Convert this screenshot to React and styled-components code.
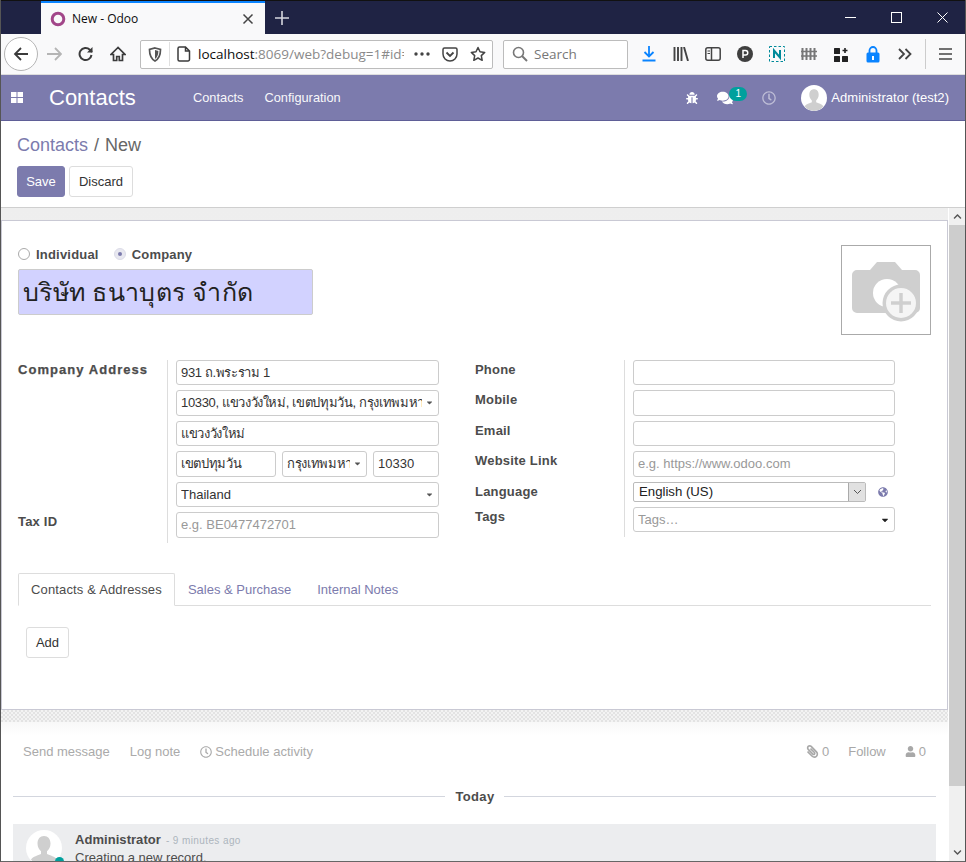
import React from "react";
import styled, { createGlobalStyle } from "styled-components";
import { FaBug, FaComments, FaRegClock, FaPaperclip, FaUser, FaGlobeAmericas, FaCaretDown, FaChevronUp, FaChevronDown } from "react-icons/fa";

const Global = createGlobalStyle`
  html, body { margin: 0; padding: 0; background: #fff; }
  body { font-family: "Liberation Sans", Arial, sans-serif; font-size: 13px; color: #4c4c4c; }
  * { box-sizing: border-box; }
`;

const Win = styled.div`
  width: 966px; height: 862px; overflow: hidden; display: flex; flex-direction: column;
  border-left: 1px solid #555; border-right: 1px solid #555; border-bottom: 1px solid #666; background: #fff;
`;
const TitleBar = styled.div`
  height: 34px; flex: none; background: #1f2344; display: flex; align-items: flex-end; padding-left: 40px; border-top: 1px solid #111;
`;
const Tab = styled.div`
  width: 224px; height: 33px; background: #f9f9fa; border-top: 2px solid #0a84ff; display: flex; align-items: center;
  padding: 0 11px 0 9px; font: 12px "Open Sans", "Liberation Sans", sans-serif; color: #0c0c0d; gap: 6px;
`;
const TabTitle = styled.span` flex: 1; `;
const Plus = styled.div` width: 34px; height: 33px; display: flex; align-items: center; justify-content: center; `;
const WinBtns = styled.div` margin-left: auto; display: flex; height: 33px; align-items: center; `;
const WinBtn = styled.div` width: 46px; height: 33px; display: flex; align-items: center; justify-content: center; `;

const Toolbar = styled.div`
  height: 41px; flex: none; background: #f9f9fa; display: flex; align-items: center; border-bottom: 1px solid #ddd; padding-left: 3px;
`;
const BackBtn = styled.div`
  width: 34px; height: 34px; border-radius: 50%; border: 1px solid #b5b5b5; background: #fff; display: flex; align-items: center; justify-content: center; flex: none;
`;
const TB = styled.div`
  width: ${p => p.$w || 32}px; height: 32px; flex: none; display: flex; align-items: center; justify-content: center;
`;
const UrlBar = styled.div`
  width: 353px; height: 29px; margin-left: 6px; flex: none; background: #fff; border: 1px solid #bcbcbc; border-radius: 2px;
  display: flex; align-items: center; font: 13.5px "Open Sans", "Liberation Sans", sans-serif; color: #0c0c0d; padding-left: 7px;
`;
const UrlSep = styled.div` width: 1px; height: 24px; background: #e0e0e0; margin: 0 7px 0 7px; `;
const UrlText = styled.div` margin-left: 7px; width: 206px; white-space: nowrap; overflow: hidden; `;
const Dim = styled.span` color: #8a8a8a; `;
const UrlIcons = styled.div` display: flex; align-items: center; margin-left: auto; `;
const SearchBox = styled.div`
  width: 125px; height: 29px; margin-left: 10px; margin-right: 5px; flex: none; background: #fff; border: 1px solid #bcbcbc; border-radius: 2px;
  display: flex; align-items: center; padding-left: 8px; gap: 6px; font: 13.5px "Open Sans", "Liberation Sans", sans-serif; color: #777;
`;
const ToolSep = styled.div` width: 1px; height: 30px; background: #ccc; margin: 0 3px 0 4px; flex: none; `;

const Navbar = styled.div`
  height: 46px; flex: none; background: #7c7bad; border-bottom: 1px solid #5f5e97; display: flex; align-items: center; color: #fff;
`;
const AppsBtn = styled.div` width: 48px; padding-left: 10px; display: flex; align-items: center; flex: none; `;
const Brand = styled.div` font-size: 22px; width: 144px; flex: none; `;
const MenuItem = styled.div` font-size: 12.8px; margin-right: 21px; opacity: .95; `;
const NavRight = styled.div` margin-left: auto; display: flex; align-items: center; padding-right: 16px; `;
const BugWrap = styled.div` width: 14px; margin-right: 19px; display: flex; `;
const Msg = styled.div`
  display: flex; position: relative; width: 30px; margin-right: 13px;
  svg { margin-left: -2px; }
`;
const Badge = styled.span`
  position: absolute; left: 10px; top: -3px; width: 18px; height: 14px; border-radius: 8px; background: #00a09d; color: #fff; font-size: 10px;
  display: flex; align-items: center; justify-content: center;
`;
const ClockWrap = styled.div` display: flex; margin-right: 25px; opacity: .5; `;
const AvatarSmall = styled.div` width: 26px; height: 26px; border-radius: 50%; overflow: hidden; background: #fff; margin-right: 4px; flex: none; `;
const UserName = styled.div` font-size: 13px; letter-spacing: .03px; white-space: nowrap; `;

const Control = styled.div`
  height: 87px; flex: none; padding: 8px 16px 0; background: #fff; border-bottom: 1px solid #cfcfcf;
`;
const Crumbs = styled.div` font-size: 18px; color: #666; display: flex; gap: 6px; height: 33px; align-items: center; `;
const CrumbLink = styled.span` color: #7c7bad; `;
const Btns = styled.div` display: flex; gap: 4px; margin-top: 4px; `;
const SaveBtn = styled.div`
  width: 48px; height: 31px; background: #7c7bad; color: #fff; border-radius: 3px; border: 1px solid #7c7bad; display: flex; align-items: center; justify-content: center; font-size: 13px;
`;
const WhiteBtn = styled.div`
  width: ${p => p.$w}px; height: 31px; background: #fff; color: #333; border-radius: 3px; border: 1px solid #ddd; display: flex; align-items: center; justify-content: center; font-size: 13px;
`;

const Body = styled.div` flex: 1; min-height: 0; display: flex; `;
const Scroller = styled.div` flex: 1; min-width: 0; overflow: hidden; display: flex; flex-direction: column; `;
const ScrollBar = styled.div` width: 16px; flex: none; margin-left: 1px; background: #f0f0f0; display: flex; flex-direction: column; `;
const ScrollEnd = styled.div` height: 17px; flex: none; display: flex; align-items: center; justify-content: center; color: #555; margin-top: ${p => p.$auto ? "auto" : "0"}; `;
const Thumb = styled.div` height: 561px; background: #cdcdcd; flex: none; `;

const SheetBg = styled.div` flex: none; padding-top: 12px; background: linear-gradient(#eeeeee, #f8f8f8); `;
const Sheet = styled.div` height: 490px; background: #fff; border: 1px solid #c9c9d4; padding: 0 16px; `;
const Head = styled.div` display: flex; justify-content: space-between; padding-top: 24px; height: 115px; `;
const HeadLeft = styled.div` padding-top: 1px; width: 295px; `;
const Radios = styled.div` display: flex; align-items: center; height: 16px; margin-bottom: 7px; font-weight: 700; `;
const Radio = styled.span`
  width: 12px; height: 12px; border-radius: 50%; border: 1px solid ${p => p.$on ? "#dcdce8" : "#aaa"}; background: ${p => p.$on ? "#e8e8f0" : "#fff"};
  margin-right: 6px; display: flex; align-items: center; justify-content: center;
  &::after { content: ""; width: 4px; height: 4px; border-radius: 50%; background: ${p => p.$on ? "#7c7bad" : "transparent"}; }
`;
const RadioLabel = styled.span` margin-right: 15px; letter-spacing: .2px; `;
const NameInput = styled.div`
  height: 46px; width: 295px; background: #d2d2ff; border: 1px solid #ccc; border-radius: 2px; font-size: 25px; letter-spacing: .3px; color: #222; padding: 0 4px; display: flex; align-items: center; white-space: nowrap;
`;
const ImageBox = styled.div` width: 90px; height: 90px; border: 1px solid #aaa; display: flex; align-items: center; justify-content: center; flex: none; `;

const Groups = styled.div` display: grid; grid-template-columns: 421px 420px; column-gap: 36px; margin-top: 24px; `;
const Group = styled.div` display: grid; grid-template-columns: 149px 1fr; align-content: start; `;
const Label = styled.div`
  font-weight: 700; font-size: 13px; padding-top: 2px; letter-spacing: ${p => p.$wide ? "1.05px" : ".2px"}; white-space: nowrap;
  ${p => p.$wide ? "-webkit-text-stroke: .25px #4c4c4c;" : ""}
`;
const Cell = styled.div` border-left: 1px solid #ddd; padding: 0 0 5px 8px; display: flex; gap: 6px; min-width: 0; `;
const Input = styled.div`
  width: ${p => p.$w ? p.$w + "px" : "100%"}; height: ${p => p.$h}px; flex: none; border: 1px solid #ccc; border-radius: 3px; background: #fff;
  display: flex; align-items: center; padding: 0 4px ${p => p.$h === 26 ? 2 : 0}px; font-size: 13px; color: ${p => p.$ph ? "#999" : "#333"}; white-space: nowrap; overflow: hidden;
  letter-spacing: ${p => p.$thai ? "-.35px" : "0"};
`;
const Clip = styled.span` overflow: hidden; flex: 1; min-width: 0; `;
const Caret = styled.span` color: ${p => p.$dark ? "#222" : "#555"}; display: flex; flex: none; margin-left: 3px; `;
const NativeSelect = styled.div`
  width: 233px; height: 20px; border: 1px solid #bbb; border-radius: 2px; display: flex; align-items: center; justify-content: space-between; font-size: 13.2px; color: #222; padding-left: 5px; flex: none;
`;
const SelectLabel = styled.span` margin-top: -2px; `;
const SelectBtn = styled.span`
  width: 17px; height: 18px; background: #e1e1e1; border-left: 1px solid #aaa; display: flex; align-items: center; justify-content: center;
`;
const GlobeWrap = styled.span` margin-left: 6px; color: #7c7bad; display: flex; align-items: center; `;

const Tabs = styled.div` display: flex; border-bottom: 1px solid #ddd; margin-top: 30px; height: 33px; `;
const TabItem = styled.div`
  height: ${p => p.$active ? 33 : 32}px; padding: ${p => p.$active ? "0 12px" : "1px 13px 0"}; display: flex; align-items: center; white-space: nowrap;
  font-size: 13px; letter-spacing: ${p => p.$active ? ".15px" : "0"};
  color: ${p => p.$active ? "#4c4c4c" : "#7c7bad"}; background: #fff;
  border: ${p => p.$active ? "1px solid #ddd" : "none"}; border-bottom-color: #fff; border-radius: 2px 2px 0 0;
`;
const TabPane = styled.div` padding: 21px 8px; `;

const Dots = styled.div` height: 12px; flex: none; background: repeating-conic-gradient(#e3e3e3 0 25%, #f3f3f3 0 50%) 0 0 / 4px 4px; `;
const Chatter = styled.div` flex: 1; background: linear-gradient(#f8f8f8, #fff 14px); `;
const ChatTop = styled.div` display: flex; align-items: center; height: 59px; padding: 0 22px; color: #aaa; font-size: 13px; `;
const ChatLink = styled.span` margin-right: 20px; display: flex; align-items: center; gap: 3px; white-space: nowrap; `;
const ChatRight = styled.div` margin-left: auto; display: flex; align-items: center; gap: 19px; `;
const Follower = styled.span` display: flex; align-items: center; gap: 3px; color: #a8a8a8; `;
const ClipIcon = styled(FaPaperclip)` transform: scaleX(-1); `;
const DateLine = styled.div` display: flex; align-items: center; margin: 0 12px; height: 30px; gap: 10px; font-weight: 700; font-size: 13px; `;
const Line = styled.div` flex: 1; height: 1px; background: #d3d6de; `;
const DateText = styled.span` letter-spacing: .3px; margin-left: 1px; `;
const Message = styled.div` margin: 13px 12px 0; background: #ecedef; height: 100px; display: flex; padding: 6px 13px; `;
const AvatarWrap = styled.div` position: relative; width: 36px; height: 36px; flex: none; margin-right: 13px; `;
const Avatar = styled.div` width: 36px; height: 36px; border-radius: 50%; overflow: hidden; background: #fff; `;
const Dot = styled.span` position: absolute; right: -2px; bottom: 0; width: 9px; height: 9px; border-radius: 50%; background: #00a09d; `;
const MsgHead = styled.div` font-size: 13px; font-weight: 700; letter-spacing: .05px; margin-top: 2px; `;
const MsgTime = styled.span` font-size: 10px; font-weight: 400; color: #adb5bd; margin-left: 5px; letter-spacing: .4px; `;
const MsgBody = styled.div` font-size: 13px; margin-top: 3px; `;

const Person = () => (
  <svg width="100%" height="100%" viewBox="0 0 36 36" style={{ display: "block" }}>
    <path d="M18 6c-4 0-6.500 3-6.500 7.500 0 3.500 1.500 6 3.500 7.800v2.700c-3 1.500-8 2.500-10 5.500C7.500 33.500 12.500 36 18 36s10.500-2.500 13-6.500c-2-3-7-4-10-5.500v-2.700c2-1.800 3.500-4.300 3.500-7.800C24.500 9 22 6 18 6z" fill="#cfcfcf" />
  </svg>
);

const stroke = { fill: "none", stroke: "#3b3b3b", strokeWidth: 1.7 };

const leftRows = [
  { label: "Company Address", wide: true, h: 25, value: "931 ถ.พระราม 1", thai: true },
  { h: 26, value: "10330, แขวงวังใหม่, เขตปทุมวัน, กรุงเทพมหานคร", caret: true, thai: true },
  { h: 25, value: "แขวงวังใหม่", thai: true },
  { h: 26, triple: true },
  { h: 25, value: "Thailand", caret: true },
  { label: "Tax ID", h: 26, value: "e.g. BE0477472701", ph: true },
];
const rightRows = [
  { label: "Phone", h: 25 },
  { label: "Mobile", h: 26 },
  { label: "Email", h: 25 },
  { label: "Website Link", h: 26, value: "e.g. https://www.odoo.com", ph: true },
];

const CaretIcon = () => <Caret><FaCaretDown size={9} /></Caret>;

const App = () => (
  <Win>
    <Global />
    <TitleBar>
      <Tab>
        <svg width="16" height="16" viewBox="0 0 16 16"><circle cx="8" cy="8" r="5.800" fill="none" stroke="#a24689" strokeWidth="3" /></svg>
        <TabTitle>New - Odoo</TabTitle>
        <svg width="12" height="12" viewBox="0 0 12 12"><path d="M1.500 1.500l9 9M10.500 1.500l-9 9" stroke="#444" strokeWidth="1.500" /></svg>
      </Tab>
      <Plus><svg width="14" height="14" viewBox="0 0 14 14"><path d="M7 0v14M0 7h14" stroke="#d5d6de" strokeWidth="1.600" /></svg></Plus>
      <WinBtns>
        <WinBtn><svg width="11" height="11" viewBox="0 0 11 11"><path d="M0 5.500h11" stroke="#fff" /></svg></WinBtn>
        <WinBtn><svg width="11" height="11" viewBox="0 0 11 11"><rect x=".5" y=".5" width="10" height="10" fill="none" stroke="#fff" /></svg></WinBtn>
        <WinBtn><svg width="11" height="11" viewBox="0 0 11 11"><path d="M.5.5l10 10M10.500.5l-10 10" stroke="#fff" /></svg></WinBtn>
      </WinBtns>
    </TitleBar>

    <Toolbar>
      <BackBtn><svg width="16" height="16" viewBox="0 0 16 16"><path d="M15 8H2M8 2L2 8l6 6" fill="none" stroke="#3b3b3b" strokeWidth="1.800" /></svg></BackBtn>
      <TB><svg width="16" height="16" viewBox="0 0 16 16"><path d="M1 8h13M9 2l6 6-6 6" fill="none" stroke="#b5b5b5" strokeWidth="1.800" /></svg></TB>
      <TB><svg width="16" height="16" viewBox="0 0 16 16"><path d="M13.500 9a6 6 0 1 1-1.700-5.200L14 6" {...stroke} strokeWidth="2" /><path d="M14.500 1v5.500H9z" fill="#3b3b3b" /></svg></TB>
      <TB><svg width="16" height="16" viewBox="0 0 16 16"><path d="M8 1.500L1 8.500h2.500v6h3.200v-4h2.600v4h3.200v-6H15z" {...stroke} /></svg></TB>
      <UrlBar>
        <svg width="14" height="15" viewBox="0 0 14 15"><path d="M7 1l5.500 1.500c0 5-1 9-5.500 11.500C2.500 11.500 1.500 7.500 1.500 2.500z" fill="none" stroke="#555" strokeWidth="1.700" /><path d="M7 3v9c2.500-2 3.300-4.500 3.400-8z" fill="#555" /></svg>
        <UrlSep />
        <svg width="14" height="16" viewBox="0 0 14 16"><path d="M2.500 1h6l4 4v8.500a1.500 1.500 0 0 1-1.500 1.500H2.500A1.500 1.500 0 0 1 1 13.500v-11A1.500 1.500 0 0 1 2.500 1zM8.500 1v4h4" fill="none" stroke="#3b3b3b" strokeWidth="1.500" /></svg>
        <UrlText>localhost<Dim>:8069/web?debug=1#id=</Dim></UrlText>
        <UrlIcons>
          <TB $w={28}><svg width="16" height="4" viewBox="0 0 16 4"><circle cx="2" cy="2" r="1.700" fill="#444" /><circle cx="8" cy="2" r="1.700" fill="#444" /><circle cx="14" cy="2" r="1.700" fill="#444" /></svg></TB>
          <TB $w={28}><svg width="16" height="15" viewBox="0 0 16 15"><path d="M2.500 1h11A1.500 1.500 0 0 1 15 2.500V7a7 7 0 0 1-14 0V2.500A1.500 1.500 0 0 1 2.500 1z" fill="none" stroke="#444" strokeWidth="1.500" /><path d="M4.500 5.500L8 9l3.500-3.500" fill="none" stroke="#444" strokeWidth="1.800" /></svg></TB>
          <TB $w={28}><svg width="16" height="16" viewBox="0 0 16 16"><path d="M8 1.500l2 4.300 4.700.6-3.400 3.200.9 4.700L8 12l-4.200 2.300.9-4.700L1.300 6.400 6 5.800z" fill="none" stroke="#444" strokeWidth="1.500" strokeLinejoin="round" /></svg></TB>
        </UrlIcons>
      </UrlBar>
      <SearchBox>
        <svg width="16" height="16" viewBox="0 0 16 16"><circle cx="6.500" cy="6.500" r="5" fill="none" stroke="#777" strokeWidth="1.600" /><path d="M10 10l5 5" stroke="#777" strokeWidth="2" /></svg>
        Search
      </SearchBox>
      <TB><svg width="14" height="16" viewBox="0 0 14 16"><path d="M7 0v10M2.500 6L7 10.500 11.500 6" fill="none" stroke="#0a84ff" strokeWidth="1.800" /><path d="M.5 14.500h13" stroke="#0a84ff" strokeWidth="2" /></svg></TB>
      <TB><svg width="16" height="14" viewBox="0 0 16 14"><path d="M1.500 0v14M5 0v14M8.500 0v14M11 0l4 14" stroke="#444" strokeWidth="1.900" /></svg></TB>
      <TB><svg width="16" height="14" viewBox="0 0 16 14"><rect x=".8" y=".8" width="14.400" height="12.400" rx="2" fill="none" stroke="#444" strokeWidth="1.500" /><path d="M6.500 1v12" stroke="#444" strokeWidth="1.500" /><path d="M2.500 4h2.500M2.500 6.500h2.500" stroke="#444" /></svg></TB>
      <TB><svg width="16" height="16" viewBox="0 0 16 16"><circle cx="8" cy="8" r="8" fill="#3f3f3f" /><path d="M6 12V4.500h2.500a2.200 2.200 0 0 1 0 4.500H6" fill="none" stroke="#fff" strokeWidth="1.500" /></svg></TB>
      <TB><svg width="16" height="16" viewBox="0 0 16 16"><rect x=".5" y=".5" width="15" height="15" fill="none" stroke="#008a9a" strokeDasharray="2.500 2" /><path d="M5 12V4.500l6 7V4" fill="none" stroke="#008a9a" strokeWidth="2" /></svg></TB>
      <TB><svg width="16" height="14" viewBox="0 0 16 14"><path d="M1.500 1v12M5.500 1v12M9.500 1v12M13.500 1v12" stroke="#777" strokeWidth="2" /><path d="M0 4.500h16M0 9h16" stroke="#777" strokeWidth="1.500" /></svg></TB>
      <TB><svg width="15" height="15" viewBox="0 0 15 15"><rect x="0" y="1" width="6" height="6" rx=".5" fill="#222" /><rect x="0" y="9" width="6" height="6" rx=".5" fill="#222" /><rect x="8" y="9" width="6" height="6" rx=".5" fill="#222" /><path d="M11 1v5M8.500 3.500h5" stroke="#222" strokeWidth="1.600" /></svg></TB>
      <TB><svg width="14" height="17" viewBox="0 0 14 17"><path d="M3.500 7V4.500a3.500 3.500 0 0 1 7 0V7" fill="none" stroke="#0a84ff" strokeWidth="1.800" /><rect x="0.500" y="6.500" width="13" height="10" rx="1.500" fill="#0a84ff" /><rect x="6" y="10" width="2" height="4" fill="#fff" /></svg></TB>
      <TB><svg width="14" height="12" viewBox="0 0 14 12"><path d="M1 1l5 5-5 5M7.500 1l5 5-5 5" fill="none" stroke="#444" strokeWidth="1.800" /></svg></TB>
      <ToolSep />
      <TB><svg width="13" height="12" viewBox="0 0 13 12"><path d="M0 1h13M0 6h13M0 11h13" stroke="#444" strokeWidth="1.700" /></svg></TB>
    </Toolbar>

    <Navbar>
      <AppsBtn><svg width="12" height="12" viewBox="0 0 12 12"><path d="M0 0h5.500v5H0zM6.500 0H12v5H6.500zM0 6h5.500v5H0zM6.500 6H12v5H6.500z" fill="#fff" /></svg></AppsBtn>
      <Brand>Contacts</Brand>
      <MenuItem>Contacts</MenuItem>
      <MenuItem>Configuration</MenuItem>
      <NavRight>
        <BugWrap><FaBug size={12} /></BugWrap>
        <Msg><FaComments size={16} /><Badge>1</Badge></Msg>
        <ClockWrap><FaRegClock size={14} /></ClockWrap>
        <AvatarSmall><Person /></AvatarSmall>
        <UserName>Administrator (test2)</UserName>
      </NavRight>
    </Navbar>

    <Control>
      <Crumbs><CrumbLink>Contacts</CrumbLink><span>/</span><span>New</span></Crumbs>
      <Btns><SaveBtn>Save</SaveBtn><WhiteBtn $w={64}>Discard</WhiteBtn></Btns>
    </Control>

    <Body>
      <Scroller>
        <SheetBg>
          <Sheet>
            <Head>
              <HeadLeft>
                <Radios>
                  <Radio /><RadioLabel>Individual</RadioLabel>
                  <Radio $on /><RadioLabel>Company</RadioLabel>
                </Radios>
                <NameInput>บริษัท ธนาบุตร จำกัด</NameInput>
              </HeadLeft>
              <ImageBox>
                <svg width="70" height="64" viewBox="0 0 70 64">
                  <path d="M6 12h13l7-8h18l7 8h13a5 5 0 0 1 5 5v33a5 5 0 0 1-5 5H6a5 5 0 0 1-5-5V17a5 5 0 0 1 5-5z" fill="#cfcfcf" />
                  <circle cx="36" cy="35" r="14" fill="#fff" />
                  <circle cx="50" cy="45" r="18.500" fill="#cfcfcf" />
                  <circle cx="50" cy="45" r="15" fill="#f5f5f5" />
                  <path d="M50 35v20M40 45h20" stroke="#cfcfcf" strokeWidth="3.500" />
                </svg>
              </ImageBox>
            </Head>

            <Groups>
              <Group>
                {leftRows.map((r, i) => (
                  <React.Fragment key={i}>
                    <Label $wide={r.wide}>{r.label}</Label>
                    <Cell>
                      {r.triple ? (
                        <>
                          <Input $h={r.h} $w={100} $thai>เขตปทุมวัน</Input>
                          <Input $h={r.h} $w={85} $thai><Clip>กรุงเทพมหานคร</Clip><CaretIcon /></Input>
                          <Input $h={r.h} $w={66}>10330</Input>
                        </>
                      ) : (
                        <Input $h={r.h} $ph={r.ph} $thai={r.thai}><Clip>{r.value}</Clip>{r.caret && <CaretIcon />}</Input>
                      )}
                    </Cell>
                  </React.Fragment>
                ))}
              </Group>
              <Group>
                {rightRows.map((r, i) => (
                  <React.Fragment key={i}>
                    <Label>{r.label}</Label>
                    <Cell><Input $h={r.h} $ph={r.ph}><Clip>{r.value}</Clip></Input></Cell>
                  </React.Fragment>
                ))}
                <Label>Language</Label>
                <Cell>
                  <NativeSelect>
                    <SelectLabel>English (US)</SelectLabel>
                    <SelectBtn><svg width="9" height="6" viewBox="0 0 9 6"><path d="M1 1l3.500 3.500L8 1" fill="none" stroke="#555" /></svg></SelectBtn>
                  </NativeSelect>
                  <GlobeWrap><FaGlobeAmericas size={10} /></GlobeWrap>
                </Cell>
                <Label>Tags</Label>
                <Cell>
                  <Input $h={25} $ph><Clip>Tags…</Clip><Caret $dark><FaCaretDown size={10} /></Caret></Input>
                </Cell>
              </Group>
            </Groups>

            <Tabs>
              <TabItem $active>Contacts &amp; Addresses</TabItem>
              <TabItem>Sales &amp; Purchase</TabItem>
              <TabItem>Internal Notes</TabItem>
            </Tabs>
            <TabPane><WhiteBtn $w={43}>Add</WhiteBtn></TabPane>
          </Sheet>
        </SheetBg>
        <Dots />
        <Chatter>
          <ChatTop>
            <ChatLink>Send message</ChatLink>
            <ChatLink>Log note</ChatLink>
            <ChatLink><FaRegClock size={12} /> Schedule activity</ChatLink>
            <ChatRight>
              <Follower><ClipIcon size={13} /> 0</Follower>
              <Follower>Follow</Follower>
              <Follower><FaUser size={11} /> 0</Follower>
            </ChatRight>
          </ChatTop>
          <DateLine><Line /><DateText>Today</DateText><Line /></DateLine>
          <Message>
            <AvatarWrap><Avatar><Person /></Avatar><Dot /></AvatarWrap>
            <div>
              <MsgHead>Administrator<MsgTime>- 9 minutes ago</MsgTime></MsgHead>
              <MsgBody>Creating a new record.</MsgBody>
            </div>
          </Message>
        </Chatter>
      </Scroller>
      <ScrollBar>
        <ScrollEnd><FaChevronUp size={9} /></ScrollEnd>
        <Thumb />
        <ScrollEnd $auto><FaChevronDown size={9} /></ScrollEnd>
      </ScrollBar>
    </Body>
  </Win>
);

export default App;
